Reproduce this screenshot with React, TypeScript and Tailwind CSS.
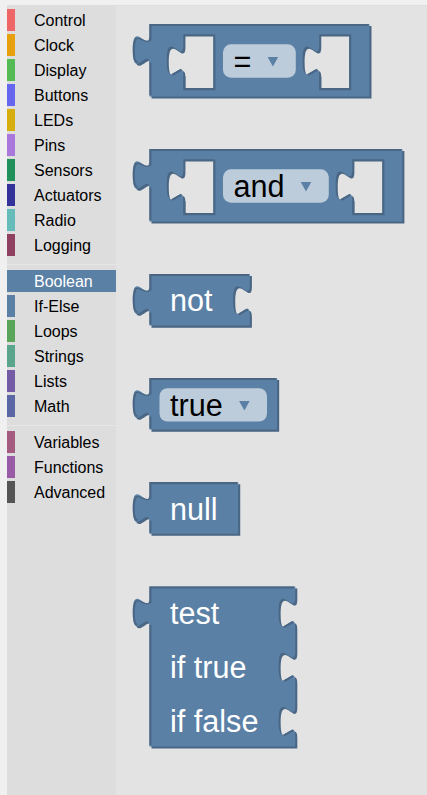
import React from "react";

const FILL = "#5b80a5";
const DARK = "#496684";
const S = 2.0833;

type Category = { name: string; color: string; selected?: boolean };

const groups: Category[][] = [
  [
    { name: "Control", color: "bg-[#f06666]" },
    { name: "Clock", color: "bg-[#e6a010]" },
    { name: "Display", color: "bg-[#55bb55]" },
    { name: "Buttons", color: "bg-[#6666ee]" },
    { name: "LEDs", color: "bg-[#d6ae10]" },
    { name: "Pins", color: "bg-[#aa77dd]" },
    { name: "Sensors", color: "bg-[#22905b]" },
    { name: "Actuators", color: "bg-[#333399]" },
    { name: "Radio", color: "bg-[#66bbbb]" },
    { name: "Logging", color: "bg-[#904060]" },
  ],
  [
    { name: "Boolean", color: "bg-[#5b80a5]", selected: true },
    { name: "If-Else", color: "bg-[#5b80a5]" },
    { name: "Loops", color: "bg-[#5ba55b]" },
    { name: "Strings", color: "bg-[#5ba58c]" },
    { name: "Lists", color: "bg-[#745ba5]" },
    { name: "Math", color: "bg-[#5b67a5]" },
  ],
  [
    { name: "Variables", color: "bg-[#a55b80]" },
    { name: "Functions", color: "bg-[#995ba5]" },
    { name: "Advanced", color: "bg-[#555555]" },
  ],
];

const TAB_DOWN = "c 0,10 -8,-8 -8,7.5 s 8,-2.5 8,7.5";
const TAB_UP = "c 0,-10 -8,8 -8,-7.5 s 8,2.5 8,-7.5";

type BlockProps = {
  top: number;
  y: number;
  height: number;
  w: number;
  h: number;
  notches?: number[];
  holes?: number[];
  children?: React.ReactNode;
};

// A value block: body with an output tab, optional right notches and inline sockets.
function Block({ top, y, height, w, h, notches = [], holes = [], children }: BlockProps) {
  const right = notches.map((n) => `V ${n} ${TAB_DOWN}`).join(" ");
  const sockets = holes.map((x) => `M ${x},5 v 5 ${TAB_DOWN} v 5.8 h 14.4 v -25.8 Z`).join(" ");
  const body = `M 0,0 H ${w} ${right} V ${h} H 0 V 20 ${TAB_UP} Z ${sockets}`;
  return (
    <svg className="block shrink-0" width="290" height={height} viewBox={`130 ${top} 290 ${height}`}>
      <g transform={`translate(149.4 ${y}) scale(${S})`}>
        <path d={body} fill={DARK} fillRule="evenodd" transform="translate(1 1)" />
        <path d={body} fill={FILL} fillRule="evenodd" />
        <g fill="none" stroke={DARK}>
          <path d={`M 0.5,${h - 0.5} V 18.5 M 0.5,8 V 0.5 H ${w - 0.5}`} />
          <path d="M -6.1,18.3 Q -7.5,17.5 -7.5,12.5 Q -7.5,8.5 -6.4,7.1" strokeLinecap="round" strokeWidth="0.95" />
          <path d="M -6.4,7.1 C -4.5,6 -2.5,9.6 0.5,8" strokeWidth="0.6" />
          {notches.map((n) => (
            <path key={n} d={`M ${w - 5},${n + 14.3} l 3.68,-2.1`} strokeLinecap="round" />
          ))}
          {holes.map((x) => (
            <path
              key={x}
              strokeLinecap="round"
              d={`M ${x + 14.9},5.5 v 25.8 H ${x + 0.5} V 25.4 M ${x - 5},24.3 l 3.68,-2.1`}
            />
          ))}
        </g>
      </g>
      <g fontFamily='"Liberation Sans", Arial, sans-serif' fontSize="30.6">
        {children}
      </g>
    </svg>
  );
}

function Field({ x, y, w, text, arrow }: { x: number; y: number; w: number; text: string; arrow: number }) {
  return (
    <>
      <rect x={x} y={y} width={w} height="33.4" rx="8" fill="#bdccdb" />
      <text x={x + 10.6} y={y + 27.4} fill="#000">
        {text}
      </text>
      <path d={`M ${arrow - 5.3},${y + 12.7} h 10.6 l -5.3,9.6 Z`} fill={FILL} />
    </>
  );
}

function Sidebar() {
  return (
    <nav className="w-[109px] shrink-0 bg-[#dddddd] pt-1">
      {groups.map((group, i) => (
        <div key={i}>
          {i > 0 && <div className="mt-2 mb-[5px] h-px bg-[#e6e6e6]" />}
          <div className="flex flex-col gap-[3px]">
            {group.map((c) => (
              <div key={c.name} className={`flex h-[22px] ${c.selected ? "bg-[#5b80a5] text-white" : "text-black"}`}>
                <span className={`h-full w-2 shrink-0 ${c.color}`} />
                <span className="pl-[19px] text-[16px] leading-[24px]">{c.name}</span>
              </div>
            ))}
          </div>
        </div>
      ))}
    </nav>
  );
}

export default function App() {
  return (
    <div className="flex h-[795px] w-[427px] overflow-hidden bg-[#f0f0f0] pt-[5px] pl-[7px] font-['Liberation_Sans',Arial,sans-serif]">
      <Sidebar />
      <main className="flex flex-1 flex-col border-t border-[#dddddd] bg-[#e3e3e3] pt-[14px] pl-[14px]">
        <Block top={20} y={23.9} height={125} w={105.6} h={34.8} holes={[16.3, 81.5]}>
          <Field x={223} y={44.3} w={72.8} text="=" arrow={272.9} />
        </Block>
        <Block top={145} y={148.9} height={125} w={121.4} h={34.8} holes={[16.3, 97.4]}>
          <Field x={223} y={169.3} w={105.8} text="and" arrow={306} />
        </Block>
        <Block top={270} y={273.9} height={104} w={48.2} h={24.8} notches={[5]}>
          <text x="170" y="311.4" fill="#fff">not</text>
        </Block>
        <Block top={374} y={377.9} height={104} w={61.3} h={24.8}>
          <Field x={159.5} y={388.2} w={107.5} text="true" arrow={244.4} />
        </Block>
        <Block top={478} y={482.1} height={104} w={42.6} h={24.8}>
          <text x="170" y="519.6" fill="#fff">null</text>
        </Block>
        <Block top={582} y={586.4} height={180} w={70} h={76.8} notches={[5, 31, 57]}>
          <g fill="#fff">
            <text x="170" y="624.4">test</text>
            <text x="170" y="678.4">if true</text>
            <text x="170" y="732.4">if false</text>
          </g>
        </Block>
      </main>
    </div>
  );
}
